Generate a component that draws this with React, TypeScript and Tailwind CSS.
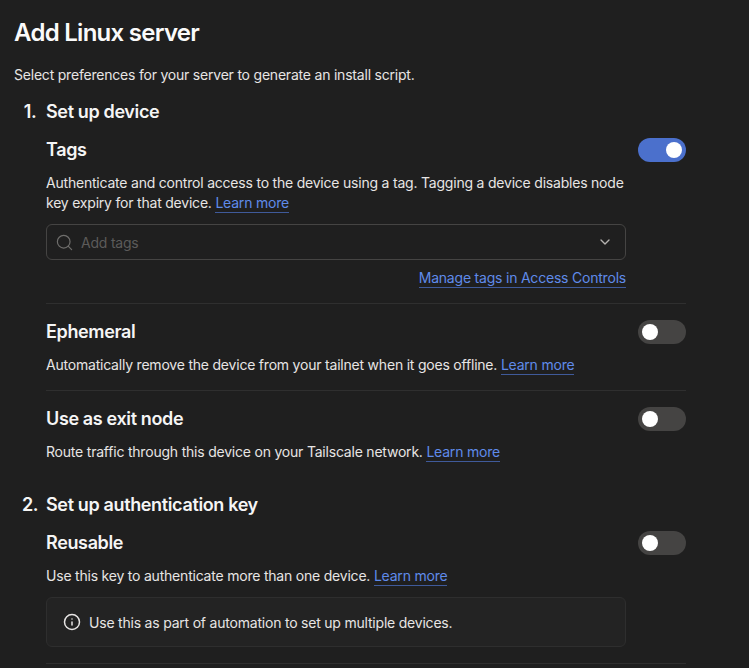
import { ChevronDown, Info, Search } from 'lucide-react'
import type { ReactNode } from 'react'

function LearnMore({ children = 'Learn more' }: { children?: ReactNode }) {
  return <a className="border-b border-[#3f5a9a] pb-px text-[#5f8bea]">{children}</a>
}

function Toggle({ on }: { on?: boolean }) {
  return (
    <div className={`flex h-6 w-12 shrink-0 items-center rounded-full px-1 ${on ? 'justify-end bg-[#4b70cc]' : 'justify-start bg-[#454443]'}`}>
      <div className="h-4 w-4 rounded-full bg-white" />
    </div>
  )
}

function OptionHeader({ title, on }: { title: string; on?: boolean }) {
  return (
    <div className="flex h-6 items-center justify-between">
      <h3 className="text-lg leading-6 font-semibold tracking-[-0.02em] text-[#f5f5f5]">{title}</h3>
      <Toggle on={on} />
    </div>
  )
}

function Step({ num, title, children }: { num: string; title: string; children: ReactNode }) {
  return (
    <section className="flex">
      <div className="w-8 shrink-0 text-center text-lg leading-7 font-semibold tracking-[-0.02em] text-[#f5f5f5]">{num}</div>
      <div className="min-w-0 flex-1">
        <h2 className="text-lg leading-7 font-semibold tracking-[-0.02em] text-[#f5f5f5]">{title}</h2>
        {children}
      </div>
    </section>
  )
}

export default function App() {
  return (
    <div className="h-[668px] w-[749px] overflow-hidden bg-[#1f1f1f] pt-[17px] pr-[63px] pl-[14px] font-['Inter',sans-serif] text-sm leading-5 tracking-[-0.015em] text-[#e7e5e4]">
      <h1 className="text-2xl leading-8 font-semibold tracking-[-0.03em] text-[#fafafa]">Add Linux server</h1>
      <p className="mt-4">Select preferences for your server to generate an install script.</p>

      <div className="mt-[13px]">
        <Step num="1." title="Set up device">
          <div className="mt-3">
            <OptionHeader title="Tags" on />
            <p className="mt-[11px] w-[600px]">
              Authenticate and control access to the device using a tag. Tagging a device disables node key expiry for that device. <LearnMore />
            </p>
            <div className="mt-[11px] flex h-9 w-[580px] items-center rounded-md border border-[#454443] pr-3 pl-2">
              <Search size={19} strokeWidth={1.5} className="text-[#6f6e6c]" />
              <span className="ml-[7px] flex-1 pt-[2px] text-[#5c5b5a]">Add tags</span>
              <ChevronDown size={16} className="text-[#b5b3b0]" />
            </div>
            <div className="mt-2 w-[580px] text-right">
              <LearnMore>Manage tags in Access Controls</LearnMore>
            </div>
          </div>

          <div className="mt-[15px] border-t border-[#2f2f2f] pt-4">
            <OptionHeader title="Ephemeral" />
            <p className="mt-[11px]">
              Automatically remove the device from your tailnet when it goes offline. <LearnMore />
            </p>
          </div>

          <div className="mt-[15px] border-t border-[#2f2f2f] pt-4">
            <OptionHeader title="Use as exit node" />
            <p className="mt-[11px]">
              Route traffic through this device on your Tailscale network. <LearnMore />
            </p>
          </div>
        </Step>
      </div>

      <div className="mt-[29px]">
        <Step num="2." title="Set up authentication key">
          <div className="mt-3">
            <OptionHeader title="Reusable" />
            <p className="mt-[11px]">
              Use this key to authenticate more than one device. <LearnMore />
            </p>
            <div className="mt-[11px] flex h-[50px] w-[580px] items-center gap-2 rounded-md border border-[#2e2e2e] bg-[#232323] px-4">
              <Info size={18} className="text-[#e7e5e4]" />
              <span className="pt-[2px]">Use this as part of automation to set up multiple devices.</span>
            </div>
          </div>
          <div className="mt-4 border-t border-[#2f2f2f]" />
        </Step>
      </div>
    </div>
  )
}
